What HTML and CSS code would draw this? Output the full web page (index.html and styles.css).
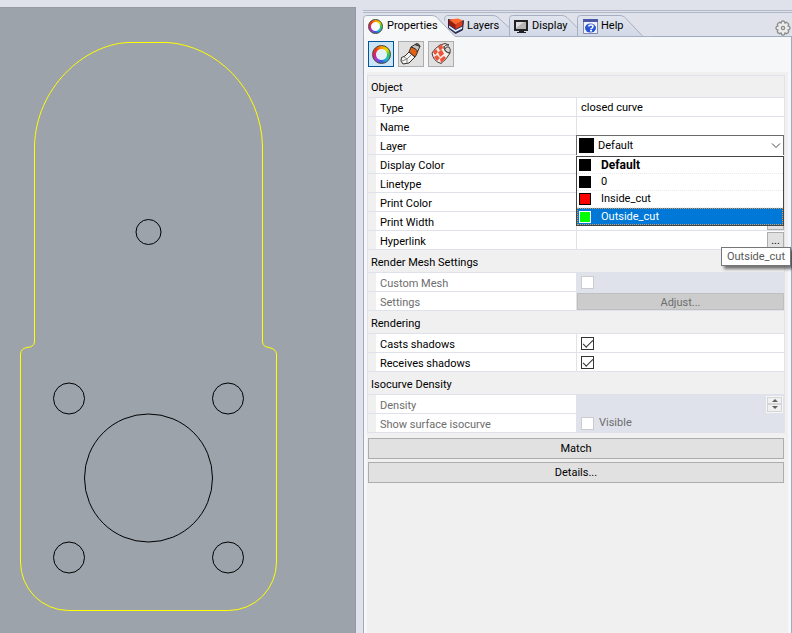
FILE: index.html
```html
<!DOCTYPE html>
<html lang="en">
<head>
<meta charset="utf-8">
<title>Properties</title>
<link rel="stylesheet" href="styles.css">
</head>
<body>
<div class="app">
  <main class="viewport">
    <svg class="drawing" width="355" height="625" viewBox="0 8 355 625" fill="none" role="img" aria-label="Plate outline with holes">
      <path stroke="#ff0" d="M34.500 342V146C36 88 84 44.500 128 42.500H168C216 46 261 88 262.500 146V342Q263 347 269 347.500Q276 349 276.500 354V562A48 48.500 0 0 1 228.500 610.500H68.500A48 48.500 0 0 1 20.500 562V354Q21 348.500 27 347.500Q34 347 34.500 342"/>
      <g stroke="#000">
        <circle cx="148.500" cy="232" r="12.500"/>
        <circle cx="69" cy="398.500" r="15.500"/>
        <circle cx="228" cy="398.500" r="15.500"/>
        <circle cx="69" cy="557.500" r="15.500"/>
        <circle cx="228" cy="557.500" r="15.500"/>
        <circle cx="148.500" cy="478" r="64"/>
      </g>
    </svg>
  </main>

  <aside class="dock">
    <div class="grip"></div>
    <div class="tabbar">
      <svg class="tab-shapes" width="290" height="22" viewBox="0 0 290 22" aria-hidden="true">
        <defs><linearGradient id="tg" x2="0" y2="1"><stop offset="0" stop-color="#e0e4ed"/><stop offset="1" stop-color="#d2d8e7"/></linearGradient></defs>
        <g fill="url(#tg)" stroke="#a6b0c2">
          <path d="M214.500 21.500V3.500Q214.500.500 217.500.500H257Q260 .500 262 2.500L280 21.500"/>
          <path d="M146.500 21.500V3.500Q146.500.500 149.500.500H199Q202 .500 204 2.500L214.500 13V21.500"/>
          <path d="M81.500 5.500Q81.500.500 84.500.500H130Q133 .500 135 2.500L146.500 13V21.500H91"/>
        </g>
        <path d="M.500 22V3.500Q.500.500 3.500.500H69Q72 .500 74 2.500L92 21.500V22Z" fill="#f6f7f9"/>
        <path d="M.500 22V3.500Q.500.500 3.500.500H69Q72 .500 74 2.500L92 21.500H290" fill="none" stroke="#a6b0c2"/>
      </svg>
      <div class="tabs" role="tablist">
        <button class="tab tab-properties" role="tab" aria-selected="true"><span class="wheel"></span>Properties</button>
        <button class="tab tab-layers" role="tab" aria-selected="false">
          <svg width="16" height="16" viewBox="0 0 16 16"><path d="M.500 1v9l7 5.500 7-3.500 1-9.500z" fill="#26345e"/><path d="M1 7.500 7.500 12l7-3.500v2L7.500 14 1 9.500z" fill="#e8ecf8"/><path d="m1 1.500 6.500 5V11L1 6.500z" fill="#9c1a0a"/><path d="m7.500 6.500 7-3.500v4.500l-7 3.500z" fill="#e23a14"/><path d="m1 1.500 9-1 5 2-7.500 4z" fill="#ff6a30"/><path d="M.500 1v9l7 5.500 7-3.500 1-9.500" fill="none" stroke="#2b2a44"/></svg>Layers
        </button>
        <button class="tab tab-display" role="tab" aria-selected="false">
          <svg width="15" height="15" viewBox="0 0 15 15"><path d="M0 1h14v11H0z" fill="#222"/><path d="M2 3h10v7H2z" fill="#b5b5b5"/><path d="M2 3h8l-8 6z" fill="#dedede"/><path d="M5 12h5v1h2v1H3v-1h2z" fill="#222"/></svg>Display
        </button>
        <button class="tab tab-help" role="tab" aria-selected="false">
          <svg width="15" height="15" viewBox="0 0 15 15"><path d="M.500.500h14v14H.500z" fill="#f2f3fa" stroke="#8589a8"/><path d="M0 0h15v3H0z" fill="#4b57a4"/><ellipse cx="7.500" cy="9" rx="5.500" ry="4.500" fill="#2855d2"/><path d="M5.500 7.500Q6 6 8 6q2 0 2 1.500T7.500 10" fill="none" stroke="#fff" stroke-width="1.500"/><path d="M7 11h2v1.500H7z" fill="#fff"/></svg>Help
        </button>
      </div>
      <button class="gear" aria-label="Panel options">
        <svg width="16" height="16" viewBox="0 0 16 16" fill="#ececec" stroke="#8c8c8c" stroke-width="1.300"><path d="M6.500 1.500Q8 .500 9.500 1.500L10 3l1.500-.7Q13.300 2.700 13.700 4.500L13 6l1.500.5Q15.500 8 14.500 9.500L13 10l.7 1.500Q13.300 13.300 11.500 13.700L10 13l-.5 1.500Q8 15.500 6.500 14.500L6 13l-1.500.7Q2.700 13.300 2.300 11.500L3 10 1.500 9.500Q.5 8 1.500 6.500L3 6l-.7-1.500Q2.700 2.700 4.500 2.300L6 3z"/><circle cx="8" cy="8" r="1.600"/></svg>
      </button>
    </div>

    <div class="panel">
      <div class="toolbar">
        <button class="tool tool-active" aria-label="Object properties"><span class="wheel wheel-large"></span></button>
        <button class="tool" aria-label="Material">
          <svg width="22" height="22" viewBox="0 0 22 22" stroke="#37302c" stroke-linejoin="round"><path d="M1.500 14.500 5 13l4-4 6 5-6 6-6 1-2-3z" fill="#f3f3f3"/><path d="m9 9 2-5 6.500 1.500Q18 11 15 14z" fill="#e06218"/><path d="m11 4 4-2.500 5 1.500-2.500 6q0-3-6.500-5z" fill="#c4c4c4"/><path d="m15 1.500 2-1 2 1 1 2z" fill="#666"/><path d="m4 14 3 2v4M7 16l4-4M2 18l5-2" fill="none" stroke="#888"/></svg>
        </button>
        <button class="tool" aria-label="Texture mapping">
          <svg width="22" height="22" viewBox="0 0 22 22" stroke-linejoin="round"><path d="M2 10Q5 5 10 2l5-1.500 4 1.500q-5-.5-5 3 1 5 6 5-3 6-9 10.500Q3 18 2 10z" fill="#f8eeea" stroke="#443a36"/><g fill="#ee5438"><path d="m3 9 3-3 2 3-3 3zM8 4l4-3 1 4-3 3zM8 9l4-2 2 4-4 3zM4 14l3-2 3 3-3 3zM10 16l4-3 2 2-5 5z"/></g><path d="M14 3q0 6 6 7 1-4-1-6-3-1-4 2" fill="#ddd5d0" stroke="#443a36"/></svg>
        </button>
      </div>

      <div class="content">
        <div class="props">
          <h2 class="group">Object</h2>
          <div class="row"><span class="name">Type</span><span class="value value-text">closed curve</span></div>
          <div class="row"><label class="name" for="name">Name</label><div class="value"><input class="text" id="name" type="text"></div></div>
          <div class="row">
            <label class="name" for="layer">Layer</label>
            <div class="value combo">
              <select class="select" id="layer"><option>Default</option><option>0</option><option>Inside_cut</option><option>Outside_cut</option></select>
              <span class="combo-swatch"></span>
              <svg class="chevron" width="10" height="6" viewBox="0 0 10 6" fill="none" stroke="#444"><path d="m1 .500 4 4 4-4"/></svg>
              <ul class="list" role="listbox" aria-label="Layer">
                <li class="option option-current" role="option"><span class="swatch"></span>Default</li>
                <li class="option" role="option"><span class="swatch"></span>0</li>
                <li class="option" role="option"><span class="swatch swatch-red"></span>Inside_cut</li>
                <li class="option option-hover" role="option" aria-selected="true"><span class="swatch swatch-green"></span>Outside_cut</li>
              </ul>
            </div>
          </div>
          <div class="row"><span class="name">Display Color</span><span class="value"></span></div>
          <div class="row"><span class="name">Linetype</span><span class="value"></span></div>
          <div class="row"><span class="name">Print Color</span><span class="value"></span></div>
          <div class="row"><span class="name">Print Width</span><div class="value"><button class="more" aria-label="Print width options"></button></div></div>
          <div class="row"><span class="name">Hyperlink</span><div class="value"><button class="more">...</button><span class="tooltip" role="tooltip">Outside_cut</span></div></div>

          <h2 class="group">Render Mesh Settings</h2>
          <div class="row row-off"><label class="name" for="mesh">Custom Mesh</label><div class="value"><input class="check" id="mesh" type="checkbox" disabled></div></div>
          <div class="row row-off"><span class="name">Settings</span><div class="value value-fill"><button class="adjust" disabled>Adjust...</button></div></div>

          <h2 class="group">Rendering</h2>
          <div class="row"><label class="name" for="casts">Casts shadows</label><div class="value"><input class="check" id="casts" type="checkbox" checked></div></div>
          <div class="row"><label class="name" for="receives">Receives shadows</label><div class="value"><input class="check" id="receives" type="checkbox" checked></div></div>

          <h2 class="group">Isocurve Density</h2>
          <div class="row row-off"><span class="name">Density</span><div class="value"><div class="spinner"><button class="step" disabled aria-label="Increase"><span class="up"></span></button><button class="step" disabled aria-label="Decrease"><span class="down"></span></button></div></div></div>
          <div class="row row-off"><span class="name">Show surface isocurve</span><div class="value"><input class="check" id="iso" type="checkbox" disabled><label for="iso">Visible</label></div></div>
        </div>
        <div class="actions">
          <button class="action">Match</button>
          <button class="action">Details...</button>
        </div>
      </div>
    </div>
  </aside>
</div>
</body>
</html>
```
FILE: styles.css
```css
* { box-sizing: border-box; }
body {
  margin: 0;
  background: #dfe2ea;
  color: #000;
  font: 11px/16px "Roboto", "Liberation Sans", sans-serif;
}
button, input, select { font: inherit; color: inherit; margin: 0; padding: 0; border: 0; border-radius: 0; }
.app { display: flex; min-height: 100vh; }

.viewport {
  flex: 1;
  min-width: 0;
  margin-top: 7px;
  overflow: hidden;
  background: #9da3ab;
  border-top: 1px solid #939aa5;
  border-right: 1px solid #939aa9;
}
.drawing { display: block; }

.dock {
  display: flex;
  flex-direction: column;
  width: 436px;
  padding: 10px 0 0 7px;
}
.grip { height: 3px; border: solid #b1b8c8; border-width: 1px 0; }

.tabbar { position: relative; display: flex; height: 24px; padding-top: 2px; border-bottom: 1px solid #a0abbd; }
.tab-shapes { position: absolute; left: 0; top: 2px; }
.tabs { position: relative; display: flex; height: 22px; }
.tab { display: flex; align-items: center; gap: 3px; background: none; }
.tab-properties { width: 85px; padding-left: 5px; gap: 4px; }
.tab-layers { width: 66px; }
.tab-display { width: 69px; }
.gear { position: relative; display: flex; margin: 5px 1px 0 auto; background: none; height: 16px; }

.wheel {
  width: 15px;
  height: 15px;
  flex: none;
  border: 1px solid #443;
  border-radius: 50%;
  background: radial-gradient(circle, #f9fafc 4px, transparent 5px), conic-gradient(#ff9b00, #e8dc00, #38c84d, #16b8d8, #315de5, #a238d8, #e11c6c, #ee3d10, #ff9b00);
}
.wheel-large {
  width: 19px;
  height: 19px;
  background: radial-gradient(circle, #e4f1fb 5px, transparent 6px), conic-gradient(#ff9b00, #e8dc00, #38c84d, #16b8d8, #315de5, #a238d8, #e11c6c, #ee3d10, #ff9b00);
}

.panel { flex: 1; padding: 0 3px; background: #f6f7f9; border: solid #a0abbd; border-width: 0 1px; }
.toolbar { display: flex; gap: 4px; padding: 4px 1px 5px; }
.tool { display: flex; align-items: center; justify-content: center; width: 26px; height: 26px; background: #e1e1e1; border: 1px solid #adadad; }
.tool-active { background: #cce4f7; border-color: #005499; }
.content { min-height: 561px; padding: 3px 3px 0 0; background: #f0f0f0; }

.props { border: 1px solid #dfe2ea; border-bottom: 0; }
.group { height: 23px; margin: 0; padding: 5px 3px 0; border-bottom: 1px solid #dfe2ea; font: inherit; }
.group:first-child { height: 22px; padding-top: 4px; }
.row { display: grid; grid-template-columns: 200px minmax(0, 1fr); grid-template-rows: 18px; height: 19px; padding-left: 8px; border-bottom: 1px solid #dfe2ea; }
.name { padding: 3px 4px 0; background: #fff; line-height: 15px; }
.value { position: relative; display: flex; align-items: center; padding-left: 4px; background: #fff; border-left: 1px solid #dfe2ea; }
.value-text { padding-top: 2px; }
.row-off { color: #6d6d6d; }
.row-off .value { background: #dfe2ea; }
.value.value-fill { padding: 0; }
.text { width: 100%; background: none; }

.value.combo { padding: 0; border: 0; }
.select { position: absolute; left: 0; right: 0; top: -1px; width: 100%; height: 21px; padding: 1px 0 0 21px; appearance: none; background: #fff; border: 1px solid #6b6b6b; }
.combo-swatch { position: absolute; left: 3px; top: 2px; width: 15px; height: 15px; background: #000; }
.chevron { position: absolute; right: 3px; top: 7px; }
.list { position: absolute; z-index: 1; left: 0; right: 0; top: 20px; margin: 0; padding: 0; list-style: none; background: #fff; border: 1px solid #444; }
.option { display: flex; align-items: center; gap: 10px; height: 17px; padding-left: 2px; border-bottom: 1px dotted #e8e8e8; line-height: 18px; }
.option-current { font-weight: bold; font-size: 12px; }
.option-hover { color: #fff; background: #0078d7; border: 1px dotted #e09a50; padding-left: 1px; }
.swatch { width: 12px; height: 12px; background: #000; border: 1px solid #000; }
.swatch-red { background: #f00; }
.swatch-green { background: #0f0; border-color: #fff; }

.more { width: 17px; height: 17px; margin-left: auto; background: #e1e1e1; border: 1px solid #adadad; }
.tooltip { position: absolute; z-index: 2; right: -7px; top: 16px; padding: 1px 5px 0; color: #575757; background: #fff; border: 1px solid #767676; box-shadow: 3px 3px 3px #0008; }

.check { display: grid; place-items: center; width: 13px; height: 13px; margin-right: 5px; appearance: none; background: #fff; border: 1px solid #333; }
.check:disabled { border-color: #ccc; }
.check:checked::before { content: ""; width: 9px; height: 4px; border: solid #333; border-width: 0 0 1px 1px; transform: translateY(-1px) rotate(-45deg); }
.adjust { width: 100%; height: 17px; padding-top: 1px; color: #6d6d6d; background: #ccc; border: 1px solid #bfbfbf; }

.spinner { display: flex; flex-direction: column; width: 17px; height: 17px; margin: 0 1px 0 auto; background: #f0f0f0; border: 1px solid #f6f6f6; }
.step { display: grid; place-items: center; flex: 1; min-height: 0; background: #f0f0f0; border: 1px solid #d5d5d5; }
.up, .down { border: solid transparent; border-width: 0 3px 3px; border-bottom-color: #606060; }
.down { border-width: 3px 3px 0; border-top-color: #606060; }

.actions { display: grid; gap: 3px; padding: 5px 1px; }
.action { height: 21px; padding-top: 1px; background: #e1e1e1; border: 1px solid #adadad; }
```
